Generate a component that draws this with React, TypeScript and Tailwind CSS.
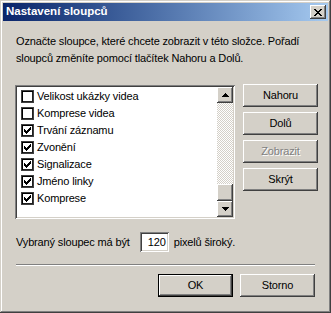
import React from 'react';

const raised =
  'bg-[#d4d0c8] shadow-[inset_-1px_-1px_#404040,inset_1px_1px_#ffffff,inset_-2px_-2px_#808080,inset_2px_2px_#d4d0c8]';
const sunken =
  'shadow-[inset_1px_1px_#808080,inset_-1px_-1px_#ffffff,inset_2px_2px_#404040,inset_-2px_-2px_#d4d0c8]';

const columns = [
  { label: 'Velikost ukázky videa', checked: false },
  { label: 'Komprese videa', checked: false },
  { label: 'Trvání záznamu', checked: true },
  { label: 'Zvonění', checked: true },
  { label: 'Signalizace', checked: true },
  { label: 'Jméno linky', checked: true },
  { label: 'Komprese', checked: true },
];

const CheckBox: React.FC<{ checked: boolean }> = ({ checked }) => (
  <span className="w-[13px] h-[13px] bg-white flex items-center justify-center shadow-[inset_1px_1px_#404040,inset_-1px_-1px_#404040,inset_2px_2px_#000000,inset_-2px_-2px_#202020]">
    {checked && (
      <svg width="7" height="7" viewBox="0 0 7 7" shapeRendering="crispEdges">
        <path d="M0 2h1v1h1v1h1v-1h1v-1h1v-1h1v-1h1v3h-1v1h-1v1h-1v1h-1v1h-1v-1h-1v-1h-1v-1h-1z" fill="#000" />
      </svg>
    )}
  </span>
);

const Button: React.FC<{ children: React.ReactNode; disabled?: boolean; isDefault?: boolean }> = ({
  children,
  disabled,
  isDefault,
}) => {
  if (isDefault) {
    return (
      <div className="w-[75px] h-[23px] border border-black flex">
        <div className={`flex-1 flex items-center justify-center ${raised}`}>{children}</div>
      </div>
    );
  }
  return (
    <div
      className={`w-[75px] h-[23px] flex items-center justify-center ${raised} ${
        disabled ? 'text-[#808080] [text-shadow:1px_1px_#ffffff]' : ''
      }`}
    >
      {children}
    </div>
  );
};

const Arrow: React.FC<{ up?: boolean }> = ({ up }) => (
  <div className={`w-[16px] h-[16px] flex items-center justify-center ${raised}`}>
    <svg width="7" height="4" viewBox="0 0 7 4" shapeRendering="crispEdges">
      {up ? <path d="M3 0h1v1h1v1h1v1h1v1h-7v-1h1v-1h1v-1h1z" fill="#000" /> : <path d="M0 0h7v1h-1v1h-1v1h-1v1h-1v-1h-1v-1h-1v-1h-1z" fill="#000" />}
    </svg>
  </div>
);

export default function App() {
  return (
    <div
      className="w-[331px] h-[313px] bg-[#d4d0c8] p-[3px] flex flex-col text-[11px] tracking-[-0.15px] text-black shadow-[inset_-1px_-1px_#404040,inset_1px_1px_#d4d0c8,inset_-2px_-2px_#808080,inset_2px_2px_#ffffff]"
      style={{ fontFamily: '"Liberation Sans", Arial, sans-serif' }}
    >
      {/* title bar */}
      <div className="h-[18px] flex items-center bg-linear-to-r from-[#0a246a] to-[#a6caf0] pl-[3px] pr-[2px]">
        <span className="flex-1 text-white font-bold text-[11.5px] tracking-normal leading-none">Nastavení sloupců</span>
        <div className={`w-[16px] h-[14px] flex items-center justify-center ${raised}`}>
          <svg width="8" height="7" viewBox="0 0 8 7" shapeRendering="crispEdges">
            <path d="M0 0h2v1h1v1h2v-1h1v-1h2v1h-1v1h-1v1h-1v1h1v1h1v1h1v1h-2v-1h-1v-1h-2v1h-1v1h-2v-1h1v-1h1v-1h1v-1h-1v-1h-1v-1h-1z" fill="#000" />
          </svg>
        </div>
      </div>

      <p className="mt-[12px] ml-[13px] leading-[17px]">
        Označte sloupce, které chcete zobrazit v této složce. Pořadí
        <br />
        sloupců změníte pomocí tlačítek Nahoru a Dolů.
      </p>

      <div className="mt-[17px] flex items-start">
        {/* column list */}
        <div className={`mt-[1px] ml-[12px] w-[220px] h-[134px] bg-white p-[2px] flex ${sunken}`}>
          <div className="flex-1 pt-[1px] flex flex-col">
            {columns.map((c) => (
              <div key={c.label} className="h-[17px] flex items-center pl-[4px] gap-[3px]">
                <CheckBox checked={c.checked} />
                <span className="leading-none">{c.label}</span>
              </div>
            ))}
          </div>
          <div className="w-[16px] flex flex-col">
            <Arrow up />
            <div className="flex-1 bg-[conic-gradient(#ffffff_25%,#d4d0c8_0_50%,#ffffff_0_75%,#d4d0c8_0)] bg-[length:2px_2px]" />
            <div className={`h-[17px] ${raised}`} />
            <Arrow />
          </div>
        </div>

        {/* buttons */}
        <div className="ml-[8px] flex flex-col gap-[5px]">
          <Button>Nahoru</Button>
          <Button>Dolů</Button>
          <Button disabled>Zobrazit</Button>
          <Button>Skrýt</Button>
        </div>
      </div>

      <div className="mt-[13px] ml-[13px] flex items-center">
        <span>Vybraný sloupec má být</span>
        <div className={`ml-[10px] w-[29px] h-[20px] bg-white flex items-center justify-end pr-[3px] ${sunken}`}>
          120
        </div>
        <span className="ml-[5px]">pixelů široký.</span>
      </div>

      <div className="mt-[12px] ml-[13px] w-[299px] h-[2px] border-t border-t-[#808080] border-b border-b-white" />

      <div className="mt-[8px] mr-[13px] flex justify-end gap-[7px]">
        <Button isDefault>OK</Button>
        <Button>Storno</Button>
      </div>
    </div>
  );
}
